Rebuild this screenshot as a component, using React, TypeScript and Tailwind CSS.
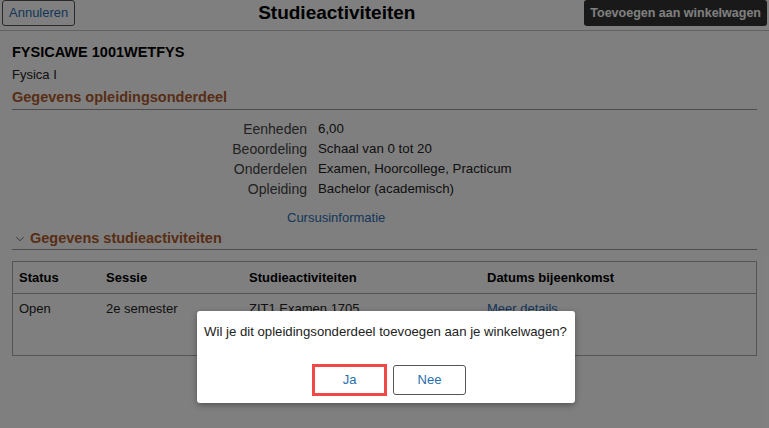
import { ChevronDown } from "lucide-react";

const details = [
  { label: "Eenheden", value: "6,00" },
  { label: "Beoordeling", value: "Schaal van 0 tot 20" },
  { label: "Onderdelen", value: "Examen, Hoorcollege, Practicum" },
  { label: "Opleiding", value: "Bachelor (academisch)" },
];

const App = () => {
  return (
    <div className="relative h-[428px] w-[769px] overflow-hidden bg-white text-[13px] text-[#222] font-['Liberation_Sans',Arial,sans-serif]">
      {/* header */}
      <div className="flex h-[31px] items-start justify-between border-b border-[#c4c4c4] px-[2px]">
        <button className="h-[26px] rounded-[3px] border border-[#555] bg-white px-[6px] text-[13px] text-[#2a6db0]">
          Annuleren
        </button>
        <h1 className="ml-[14px] text-[19px] font-bold leading-[26px] text-black">Studieactiviteiten</h1>
        <button className="h-[26px] rounded-[3px] bg-[#333] px-[6px] text-[12.5px] font-bold text-white">
          Toevoegen aan winkelwagen
        </button>
      </div>

      <div className="px-[12px]">
        <div className="pt-[12px] text-[14.5px] font-bold leading-[18px] text-black">FYSICAWE 1001WETFYS</div>
        <div className="pt-[5px] leading-[17px]">Fysica I</div>

        <div className="mt-[5px] border-b border-[#999] pb-[2px] text-[14.5px] font-bold leading-[19px] text-[#b05a2b]">
          Gegevens opleidingsonderdeel
        </div>

        <div className="flex flex-col pt-[9px]">
          {details.map((d) => (
            <div key={d.label} className="flex h-[20px] items-center gap-[11px]">
              <span className="w-[295px] text-right text-[14px] text-[#444]">{d.label}</span>
              <span className="text-[13.3px]">{d.value}</span>
            </div>
          ))}
        </div>

        <div className="pl-[275px] pt-[11px] leading-[16px] text-[#2a6db0]">Cursusinformatie</div>

        <div className="mt-[3px] flex items-center gap-[3px] border-b border-[#999] pb-[1px] text-[14.5px] font-bold leading-[19px] text-[#b05a2b]">
          <ChevronDown className="ml-[1px] h-[14px] w-[14px] text-[#444]" strokeWidth={1.3} />
          <span>Gegevens studieactiviteiten</span>
        </div>

        <div className="mt-[11px] border border-[#aaa]">
          <div className="grid h-[32px] grid-cols-[87px_143px_238px_1fr] items-center border-b border-[#aaa] px-[6px] font-bold text-black">
            <span>Status</span>
            <span>Sessie</span>
            <span>Studieactiviteiten</span>
            <span>Datums bijeenkomst</span>
          </div>
          <div className="grid h-[61px] grid-cols-[87px_143px_238px_1fr] items-start px-[6px] pt-[5px]">
            <span>Open</span>
            <span>2e semester</span>
            <span>ZIT1 Examen 1705</span>
            <span className="text-[#2a6db0]">Meer details</span>
          </div>
        </div>
      </div>

      {/* overlay */}
      <div className="absolute inset-0 bg-black/50" />

      {/* dialog */}
      <div className="absolute left-[197px] top-[311px] flex h-[92px] w-[378px] flex-col items-center rounded-[3px] bg-white shadow-[0_2px_6px_rgba(0,0,0,0.35)]">
        <p className="w-full pl-[7px] pt-[13px] text-[13.2px] leading-[16px] text-[#222]">
          Wil je dit opleidingsonderdeel toevoegen aan je winkelwagen?
        </p>
        <div className="mt-[24px] flex items-center gap-[6px] pl-[6px]">
          <button className="h-[32px] w-[75px] border-[3px] border-[#f04848] text-[13px] text-[#2a6db0]">Ja</button>
          <button className="h-[30px] w-[73px] rounded-[3px] border border-[#555] text-[13px] text-[#2a6db0]">Nee</button>
        </div>
      </div>
    </div>
  );
};

export default App;
